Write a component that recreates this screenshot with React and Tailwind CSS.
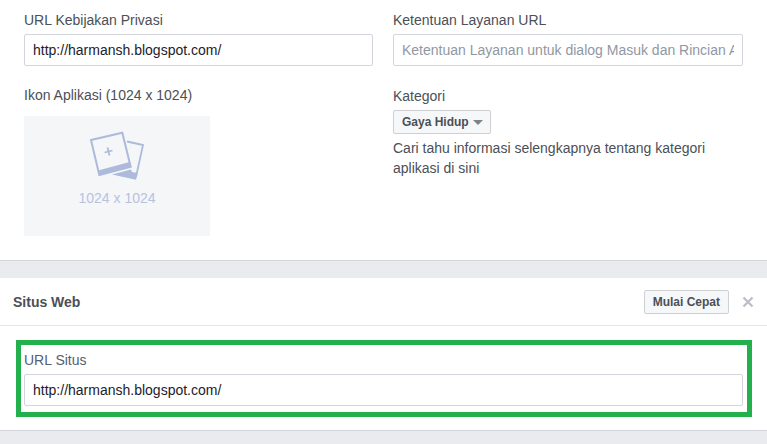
function PhotoIcon() {
  return (
    <svg width="58" height="52" viewBox="0 0 58 52" fill="none">
      <path d="M39 11.5 L55 15 L48 47" stroke="#adbadb" strokeWidth="1.8" />
      <path d="M24 44.5 L43 39.5 L44 42 L49.5 43 L48 49.7 Z" fill="#adbadb" />
      <path d="M3 10 L34.3 2.7 L42.7 36.7 L11.3 45 Z" stroke="#adbadb" strokeWidth="2" strokeLinejoin="miter" />
      <path d="M10 40.5 L41.6 32 L42.7 36.7 L11.3 45 Z" fill="#adbadb" />
      <path d="M19.5 17.5 L21.5 25.5 M16.5 22.5 L24.5 20.5" stroke="#adbadb" strokeWidth="1.8" />
    </svg>
  )
}

function TextField({ value, placeholder }) {
  return (
    <input
      readOnly
      value={value}
      placeholder={placeholder}
      className="block w-full h-8 px-2 bg-white border border-[#d3d5dc] rounded-[2px] text-sm text-[#1d2129] placeholder:text-[#9197a3] outline-none"
    />
  )
}

export default function App() {
  return (
    <div className="w-[767px] h-[444px] overflow-hidden bg-[#e9ebee] font-['Liberation_Sans',Arial,sans-serif] text-sm text-[#4b4f56]">
      <div className="h-[261px] bg-white border-b border-[#d3d6db] px-6 pt-3 grid grid-cols-[349px_350px] gap-x-5 content-start">
        <div>
          <div className="h-[22px] leading-4">URL Kebijakan Privasi</div>
          <TextField value="http://harmansh.blogspot.com/" />
          <div className="mt-[21px] h-[29px] leading-4">Ikon Aplikasi (1024 x 1024)</div>
          <div className="w-[186px] h-[120px] bg-[#f5f6f8] flex flex-col items-center pt-[14px]">
            <PhotoIcon />
            <div className="mt-2 leading-4 text-[#b6c2de]">1024 x 1024</div>
          </div>
        </div>
        <div>
          <div className="h-[22px] leading-4">Ketentuan Layanan URL</div>
          <TextField placeholder="Ketentuan Layanan untuk dialog Masuk dan Rincian Aplikasi" />
          <div className="mt-[22px] h-[22px] leading-4">Kategori</div>
          <button className="flex items-center gap-1 w-[98px] h-6 pl-2 pr-[6px] bg-[#f6f7f9] border border-[#ced0d4] rounded-[2px] text-xs font-bold text-[#4b4f56] whitespace-nowrap">
            Gaya Hidup
            <span className="shrink-0 w-0 h-0 border-x-[5px] border-x-transparent border-t-[5px] border-t-[#7f8389] mt-[1px]"></span>
          </button>
          <p className="mt-[4px] leading-5">Cari tahu informasi selengkapnya tentang kategori aplikasi di sini</p>
        </div>
      </div>

      <div className="mt-[17px] h-[153px] bg-white border-b border-[#d3d6db]">
        <div className="h-12 pl-[13px] pr-3 flex items-center justify-between border-b border-[#e5e6e9]">
          <div className="text-sm font-bold mt-[1px]">Situs Web</div>
          <div className="flex items-center gap-[13px]">
            <button className="h-6 px-2 bg-[#f6f7f9] border border-[#ced0d4] rounded-[2px] text-xs font-bold text-[#4b4f56]">
              Mulai Cepat
            </button>
            <svg width="12" height="12" viewBox="0 0 12 12" className="mr-[1px] mt-[1px]">
              <path d="M1.5 1.5 L10.5 10.5 M10.5 1.5 L1.5 10.5" stroke="#bcc0c7" strokeWidth="2.4" />
            </svg>
          </div>
        </div>
        <div className="mt-[14px] mx-4 w-[736px] h-[77px] border-[5px] border-[#22b14c] pl-[3px] pr-[4px] pt-[7px]">
          <div className="h-[22px] leading-4 text-[#566074]">URL Situs</div>
          <TextField value="http://harmansh.blogspot.com/" />
        </div>
      </div>
    </div>
  )
}
